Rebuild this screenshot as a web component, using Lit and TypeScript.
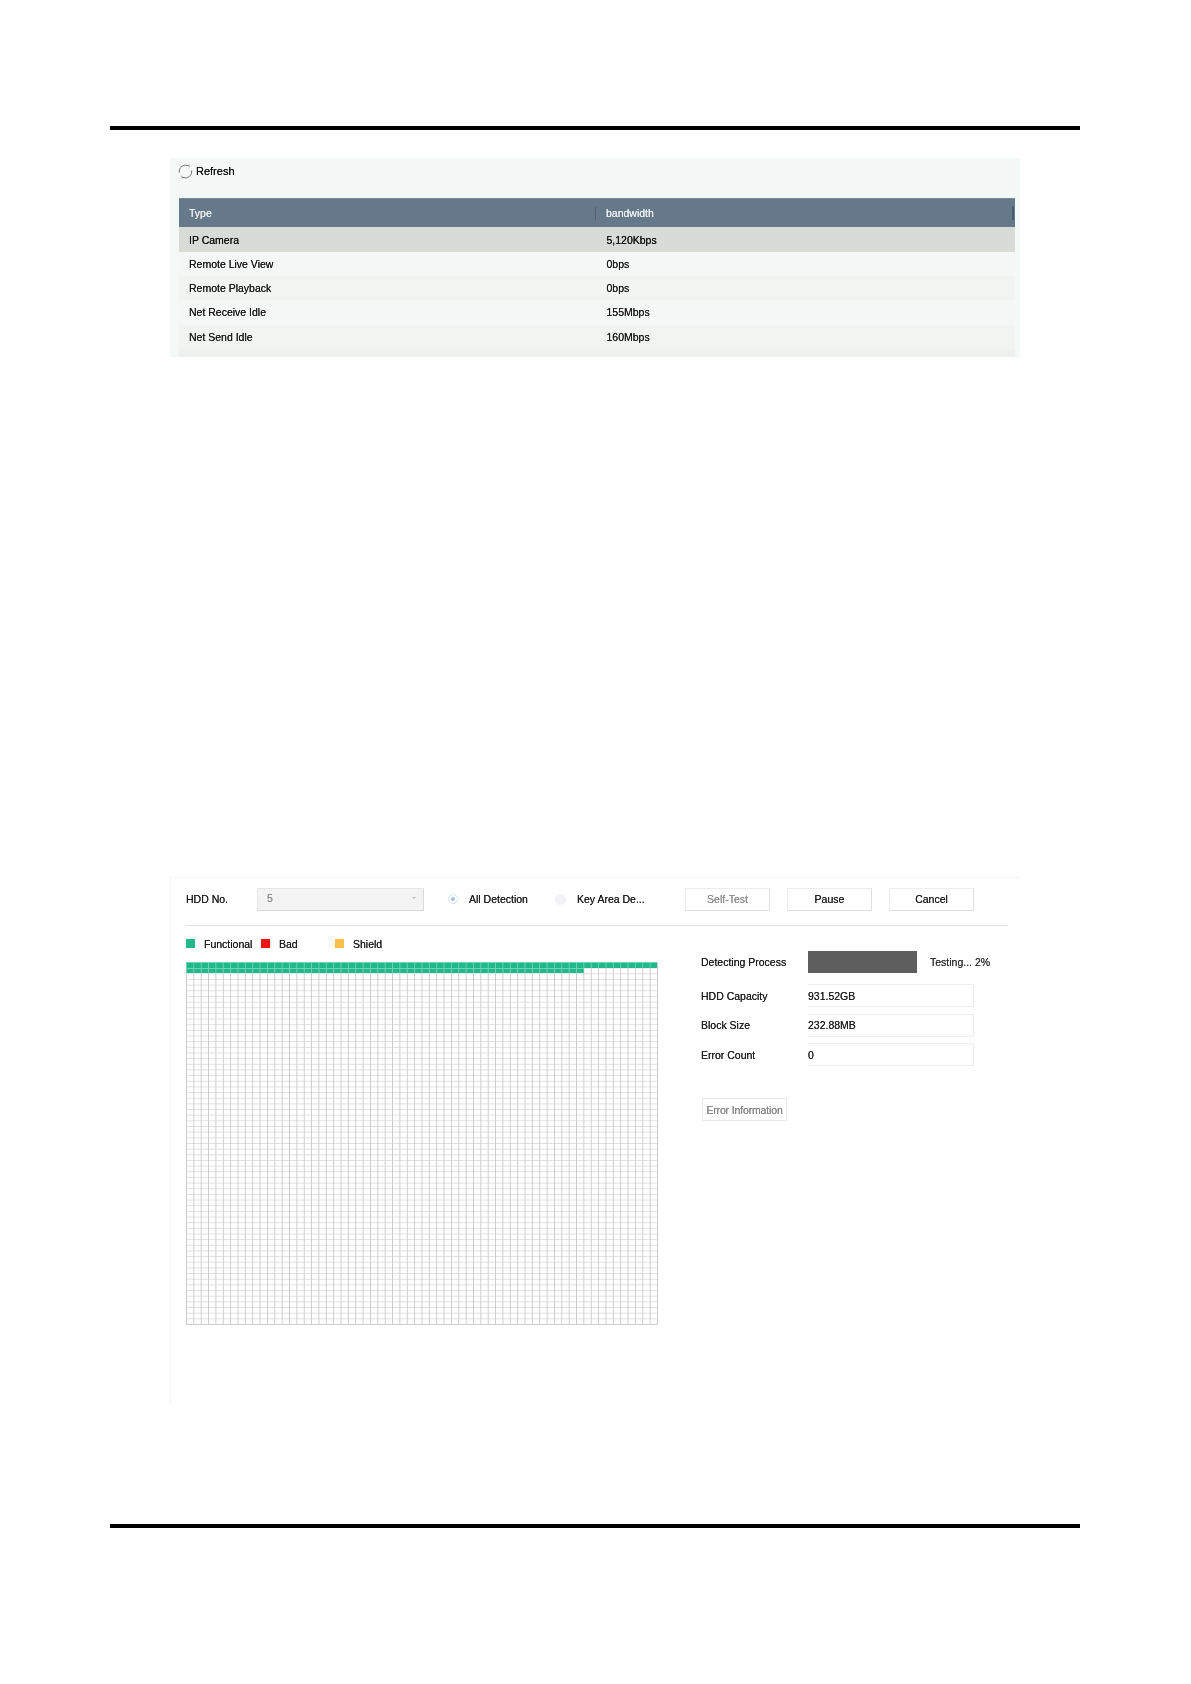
import { LitElement, html, css } from "lit";
import { customElement } from "lit/decorators.js";

const rows: [string, string][] = [
  ["IP Camera", "5,120Kbps"],
  ["Remote Live View", "0bps"],
  ["Remote Playback", "0bps"],
  ["Net Receive Idle", "155Mbps"],
  ["Net Send Idle", "160Mbps"],
];

@customElement("app-root")
export class AppRoot extends LitElement {
  static styles = css`
    :host {
      display: block;
      width: 1191px;
      height: 1684px;
      background: #fff;
      font-family: "Liberation Sans", Arial, sans-serif;
      font-size: 10.5px;
      color: #1f1f1f;
      box-sizing: border-box;
      padding-top: 126px;
      overflow: hidden;
    }
    .rule {
      height: 4px;
      background: #000;
      margin-left: 110px;
      width: 970px;
    }
    .panel1 {
      margin: 28px 0 0 170px;
      width: 850px;
      height: 199px;
      background: #f4f8f6;
      box-sizing: border-box;
      padding: 0 5px 0 9px;
      filter: blur(0.4px);
      text-shadow: 0 0 0.6px currentColor;
    }
    .refresh {
      height: 26px;
      margin-bottom: 14px;
      display: flex;
      align-items: center;
      gap: 3px;
      font-size: 11px;
      color: #111;
      box-sizing: border-box;
    }
    .refresh svg { display: block; margin-left: -1px; }
    .thead {
      height: 29px;
      background: #66798a;
      border-top: 1px solid #7b8a97;
      box-sizing: border-box;
      color: #eef2f4;
      display: grid;
      grid-template-columns: 416px 1fr;
      align-items: center;
      position: relative;
    }
    .thead div { padding-left: 10px; }
    .thead div + div { border-left: 1px solid #4f6272; height: 13px; line-height: 13px; padding-left: 10px; }
    .thead i { position: absolute; right: 1px; top: 7px; width: 2px; height: 14px; background: #4a5c6b; }
    .trow {
      height: 24.2px;
      display: grid;
      grid-template-columns: 416px 1fr;
      align-items: center;
      background: #f1f4f0;
      color: #1a1a1a;
    }
    .trow:nth-child(even) { background: #f3f7f5; }
    .trow.sel { height: 25px; background: #d9dcd6; color: #111; }
    .trow div { padding-left: 10px; }
    .trow div + div { padding-left: 11.5px; }
    .rest { height: 8.2px; background: #eef1ee; }
    .panel2 {
      margin-top: 520px;
      margin-left: 170px;
      width: 851px;
      height: 528px;
      border-top: 1px solid #f4f4f4;
      border-left: 1px solid #f4f4f4;
      box-sizing: border-box;
      padding-left: 15px;
      filter: blur(0.35px);
      text-shadow: 0 0 0.5px currentColor;
    }
    .toolbar {
      height: 48px;
      margin-right: 13px;
      display: flex;
      align-items: center;
      border-bottom: 1px solid #e2e2e2;
      box-sizing: border-box;
      padding-bottom: 5px;
    }
    .lbl-hdd { width: 71px; }
    .select {
      width: 167px;
      height: 23px;
      background: #f3f3f3;
      border: 1px solid #e6e6e6;
      border-right-color: #d9d9d9;
      border-bottom-color: #d9d9d9;
      box-sizing: border-box;
      color: #8f8f8f;
      display: flex;
      align-items: center;
      justify-content: space-between;
      padding: 0 7px 2px 9px;
    }
    .caret { width: 0; height: 0; border: 2px solid transparent; border-top: 2px solid #bbb; margin-top: 2px; }
    .radio {
      width: 10px;
      height: 10px;
      border-radius: 50%;
      box-sizing: border-box;
      display: flex;
      align-items: center;
      justify-content: center;
      background: #f2f3f4;
      flex: none;
    }
    .radio.on { background: #fff; border: 1px solid #d5e3f2; margin-left: 24px; }
    .radio.on::after { content: ""; width: 4px; height: 4px; border-radius: 50%; background: #a2bfe0; }
    .radio.off { margin-left: 28px; width: 11px; height: 11px; }
    .rlabel { margin-left: 11px; white-space: nowrap; }
    .rlabel.a { width: 58px; }
    .rlabel.b { margin-left: 11px; width: 66px; }
    .btn {
      width: 85px;
      height: 23px;
      background: #fff;
      border: 1px solid #ececec;
      border-right-color: #e0e0e0;
      border-bottom-color: #e0e0e0;
      box-sizing: border-box;
      display: flex;
      align-items: center;
      justify-content: center;
      white-space: nowrap;
    }
    .btn.dis { color: #8d8d8d; }
    .tb-btns { display: flex; gap: 17px; margin-left: 42px; }
    .body { display: flex; align-items: flex-start; }
    .left { width: 472px; }
    .legend {
      height: 36px;
      display: flex;
      align-items: center;
      box-sizing: border-box;
      padding-bottom: 1px;
    }
    .sw { width: 9px; height: 9px; flex: none; }
    .lg { margin-left: 9px; }
    .w1 { width: 57px; }
    .w2 { width: 39px; margin-right: 17px; }
    .c-green { background: #1fb98a; }
    .c-red { background: #f01414; }
    .c-amber { background: #fbbf4a; }
    .grid {
      position: relative;
      width: 472px;
      height: 363px;
      box-sizing: border-box;
      border-right: 1px solid #cccccc;
      border-bottom: 1px solid #cccccc;
      background-color: #fff;
      background-image:
        linear-gradient(to right, #cbcbcb 1px, transparent 1px),
        linear-gradient(to bottom, #e0e0e0 1px, transparent 1px);
      background-size: 7.36px 100%, 100% 5.66px;
    }
    .g1, .g2 {
      height: 5.66px;
      background-color: #1fb98a;
      background-image:
        linear-gradient(to right, #6fd3b5 1px, transparent 1px),
        linear-gradient(to bottom, #6fd3b5 1px, transparent 1px);
      background-size: 7.36px 100%, 100% 5.66px;
    }
    .g1 { width: 471px; }
    .g2 { width: 398px; }
    .right { margin-left: 43px; padding-top: 24.5px; }
    .frow { display: flex; align-items: center; }
    .frow .k { width: 107px; white-space: nowrap; }
    .bar { width: 109px; height: 22px; background: #5e5e5e; }
    .status { margin-left: 13px; color: #333; white-space: nowrap; }
    .val {
      width: 166px;
      height: 23px;
      box-sizing: border-box;
      border: 1px solid #eeeeee;
      border-left: none;
      display: flex;
      align-items: center;
    }
    .f1 { margin-top: 11.5px; }
    .f2 { margin-top: 6.5px; }
    .err {
      margin-top: 32px;
      margin-left: 1px;
      width: 85px;
      height: 23px;
      border: 1px solid #e8e8e8;
      box-sizing: border-box;
      display: flex;
      align-items: center;
      justify-content: center;
      color: #858585;
      white-space: nowrap;
      letter-spacing: -0.15px;
    }
    .bottom { margin-top: 119px; }
  `;

  render() {
    return html`
      <div class="rule"></div>
      <div class="panel1">
        <div class="refresh">
          <svg width="15" height="15" viewBox="0 0 15 15" fill="none" stroke="#6a6a6a" stroke-width="0.9">
            <path d="M1.3 8.6A6.3 6.3 0 0 1 10.2 1.7" />
            <path d="M13.7 6.4A6.3 6.3 0 0 1 4.8 13.3" />
            <path d="M11.2 0.7 10.4 1.8 11.8 3.2" />
            <path d="M3.8 14.3 4.6 13.2 3.2 11.8" />
          </svg>
          <span>Refresh</span>
        </div>
        <div class="thead"><div>Type</div><div>bandwidth</div><i></i></div>
        ${rows.map(
          ([a, b], i) => html`<div class="trow ${i === 0 ? "sel" : ""}"><div>${a}</div><div>${b}</div></div>`
        )}
        <div class="rest"></div>
      </div>
      <div class="panel2">
        <div class="toolbar">
          <span class="lbl-hdd">HDD No.</span>
          <div class="select"><span>5</span><span class="caret"></span></div>
          <span class="radio on"></span><span class="rlabel a">All Detection</span>
          <span class="radio off"></span><span class="rlabel b">Key Area De...</span>
          <div class="tb-btns">
            <div class="btn dis">Self-Test</div>
            <div class="btn">Pause</div>
            <div class="btn">Cancel</div>
          </div>
        </div>
        <div class="body">
          <div class="left">
            <div class="legend">
              <span class="sw c-green"></span><span class="lg w1">Functional</span>
              <span class="sw c-red"></span><span class="lg w2">Bad</span>
              <span class="sw c-amber"></span><span class="lg">Shield</span>
            </div>
            <div class="grid"><div class="g1"></div><div class="g2"></div></div>
          </div>
          <div class="right">
            <div class="frow"><span class="k">Detecting Process</span><div class="bar"></div><span class="status">Testing... 2%</span></div>
            <div class="frow f1"><span class="k">HDD Capacity</span><div class="val">931.52GB</div></div>
            <div class="frow f2"><span class="k">Block Size</span><div class="val">232.88MB</div></div>
            <div class="frow f2"><span class="k">Error Count</span><div class="val">0</div></div>
            <div class="err">Error Information</div>
          </div>
        </div>
      </div>
      <div class="rule bottom"></div>
    `;
  }
}
